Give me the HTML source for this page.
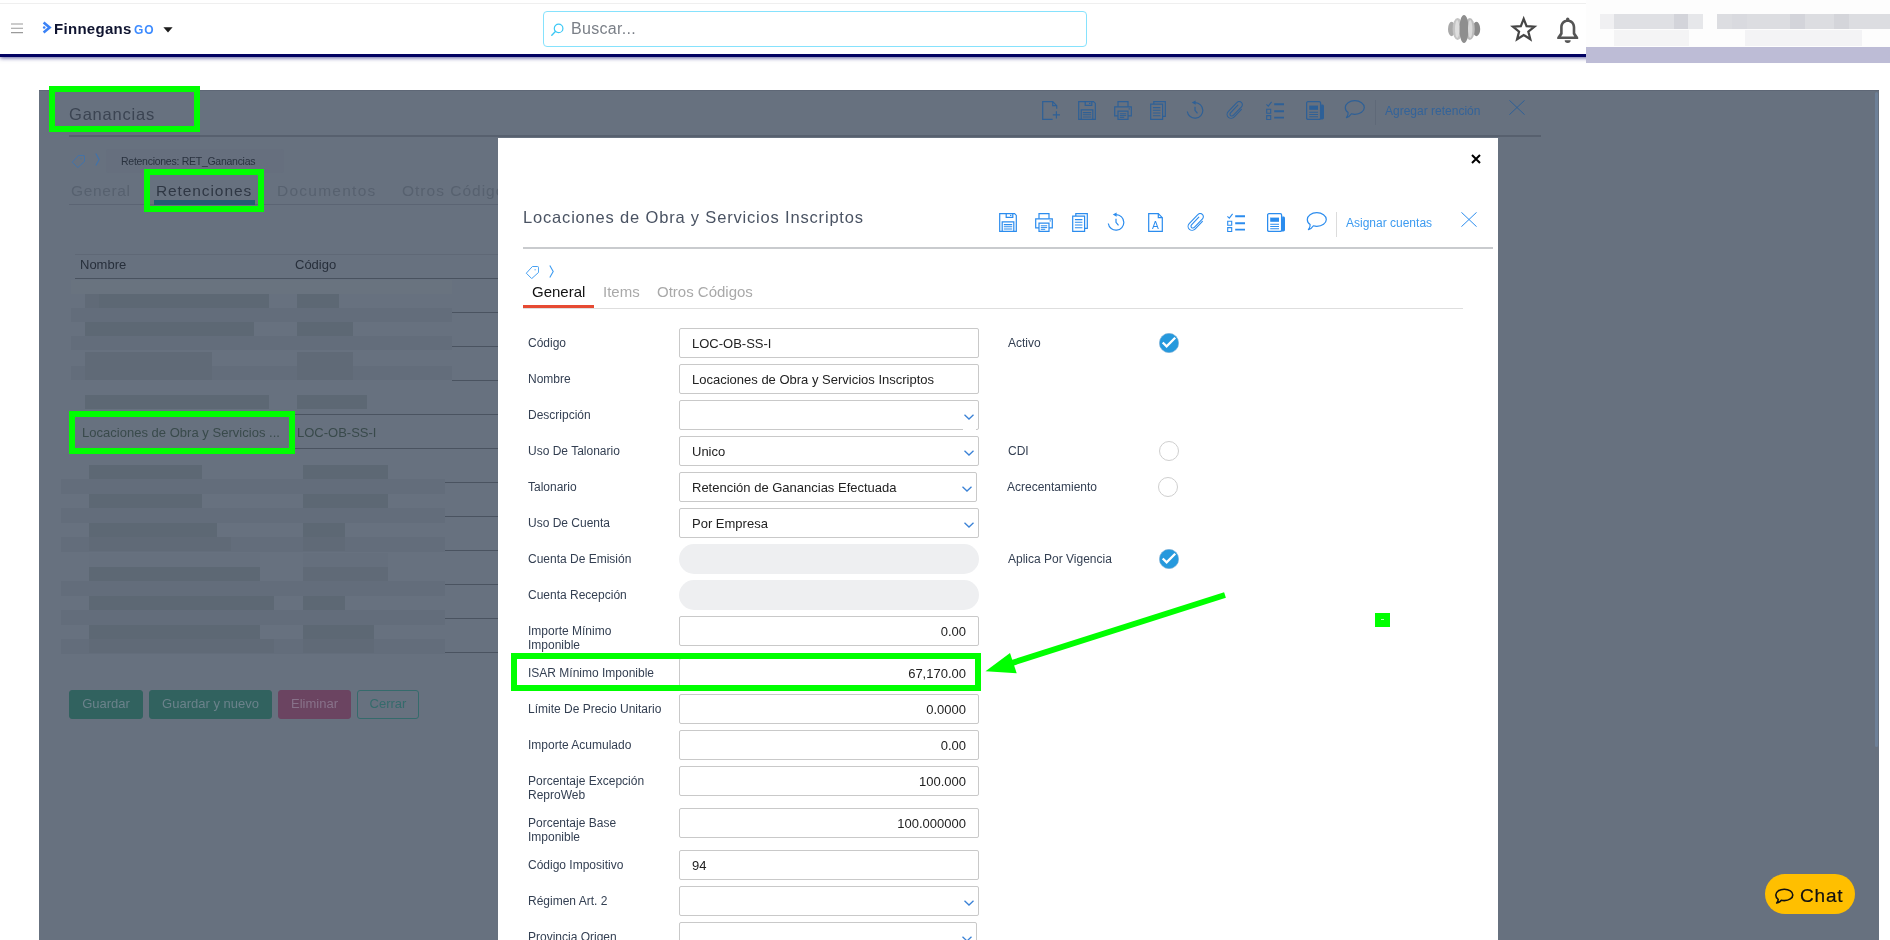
<!DOCTYPE html>
<html lang="es">
<head>
<meta charset="utf-8">
<title>Finnegans GO - Ganancias</title>
<style>
*{box-sizing:border-box;margin:0;padding:0}
html,body{width:1890px;height:940px;overflow:hidden;background:#fff;font-family:"Liberation Sans",sans-serif;color:#333}
#root{position:relative;width:1890px;height:940px;overflow:hidden;background:#fff;will-change:transform}
.abs{position:absolute}
.t{position:absolute;white-space:nowrap;line-height:1}
/* ---------- header ---------- */
#hdr{position:absolute;left:0;top:0;width:1890px;height:57px;background:#fff;border-bottom:3px solid #020262;box-shadow:0 1px 4px rgba(20,20,110,.7)}
#topline{position:absolute;left:0;top:3px;width:1590px;height:1px;background:#efefef}
#search{position:absolute;left:543px;top:11px;width:544px;height:36px;border:1px solid #86e2fd;border-radius:4px;background:#fff}
/* ---------- overlay ---------- */
#ov{position:absolute;left:39px;top:90px;width:1840px;height:850px;background:#67717f;overflow:hidden;border-top:1px solid #5e6776}
/* ---------- modal ---------- */
#modal{position:absolute;left:498px;top:138px;width:1000px;height:802px;background:#fff;overflow:hidden}
.lbl{position:absolute;font-size:12px;line-height:14px;color:#333f52;left:30px}
.inp{position:absolute;left:181px;width:300px;height:30px;border:1px solid #c9c9c9;border-radius:2px;background:#fff;font-size:13px;line-height:30px;color:#222;padding:0 12px;white-space:nowrap}
.inp.r{text-align:right}
.pill{position:absolute;left:181px;width:300px;height:30px;border-radius:15px;background:#eeeff1}
.g{position:absolute;border:6px solid #00ff00}
</style>
</head>
<body>
<div id="root">
<svg width="0" height="0" style="position:absolute">
<defs>
<symbol id="i-save" viewBox="0 0 18 19"><g fill="none" stroke="currentColor" stroke-width="1.2"><path d="M.7.7H15.6L17.300 2.400V18.300H.7z"/><path d="M7.200.7V4.300h6.600V.7"/><path d="M3.200 18.300V8.800h11.600v9.500"/><path d="M4.800 11.600h8.400M4.800 13.800h8.400M4.800 16h8.400" stroke-width="1.100"/><path d="M11 2.300h1.400" stroke-width="1.300"/></g></symbol>
<symbol id="i-print" viewBox="0 0 18 19"><g fill="none" stroke="currentColor" stroke-width="1.200"><path d="M4 5.800V.7h10v5.100"/><path d="M4 14.800H.7V5.800h16.600v9H14"/><path d="M4 10.200h10v8.100H4z"/><path d="M5.800 12.800h6.400M5.800 14.600h6.400M5.800 16.300h4.400" stroke-width="1"/><path d="M14.600 7.900h1.200" stroke-width="1.300"/></g></symbol>
<symbol id="i-copy" viewBox="0 0 17 19"><g fill="none" stroke="currentColor" stroke-width="1.200"><path d="M3.800 3V.7h11.500v14.600H12.600"/><path d="M.7 3.200h11.900v15.100H.7z"/><path d="M2.900 6.600h7.500M2.900 9.300h7.500M2.900 12h7.500M2.900 14.700h7.500" stroke-width="1.100"/></g></symbol>
<symbol id="i-hist" viewBox="0 0 18 19"><g fill="none" stroke="currentColor" stroke-width="1.200"><path d="M9.200 2.600A7.800 7.800 0 1 1 1.300 11.500"/><path d="M9 6.800v3.600l2.500 2.900"/><path d="M9.600.4v4.400L5.800 2.600z" fill="currentColor" stroke="none"/></g></symbol>
<symbol id="i-doca" viewBox="0 0 15 19"><g fill="none" stroke="currentColor" stroke-width="1.200"><path d="M.7.700h9.600l4 4v13.600H.7z"/><path d="M10.300.7v4h4"/></g><text x="7.500" y="15.600" font-size="10.200" text-anchor="middle" fill="currentColor" font-family="Liberation Sans, sans-serif">A</text></symbol>
<symbol id="i-newdoc" viewBox="0 0 19 19"><g fill="none" stroke="currentColor" stroke-width="1.200"><path d="M10.600 18.300H.7V.7h10l4 4v3"/><path d="M10.700.7v4h4"/><path d="M14.400 10.200v7.200M10.800 13.800h7.200"/></g></symbol>
<symbol id="i-clip" viewBox="0 0 18 19"><g fill="none" stroke="currentColor" stroke-width="1.100" stroke-linecap="round" stroke-linejoin="round"><path d="M15.400 8.300 8.300 15.900c-1.600 1.700-4.200 1.900-5.900.4-1.700-1.500-1.700-4-.2-5.700L10.800 1.700c1.200-1.300 3.200-1.400 4.500-.3 1.300 1.100 1.400 3.100.2 4.400L7.300 14.400c-.7.800-1.900.9-2.700.2-.8-.7-.8-1.900-.1-2.700L11.800 4.200"/></g></symbol>
<symbol id="i-list" viewBox="0 0 18 19"><g fill="none" stroke="currentColor"><path d="M.4 3.400 2.300 5.100 5.600.8" stroke-width="1.100"/><path d="M.7 8.300h4v4h-4zM.7 14.600h4v3.900h-4z" stroke-width="1.100"/><path d="M8.200 3.300h9.800M8.200 10.300h9.800M8.200 16.600h9.800" stroke-width="1.900"/></g></symbol>
<symbol id="i-news" viewBox="0 0 18 19"><path d="M15.200 3.600h1.200c.9 0 1.600.7 1.600 1.600v11.600c0 .9-.7 1.600-1.600 1.600h-2.200z" fill="currentColor"/><path d="M2 .7h11.200c.8 0 1.400.6 1.400 1.400v14.900c0 .8-.6 1.400-1.400 1.400H2c-.8 0-1.400-.6-1.400-1.400V2.100C.6 1.300 1.200.7 2 .7z" fill="none" stroke="currentColor" stroke-width="1.300"/><path d="M3.200 4.600h8.800v4.200H3.200z" fill="currentColor"/><path d="M3.200 11.300h8.800M3.200 13.500h8.800M3.200 15.700h8.800" stroke="currentColor" stroke-width="1.100" fill="none"/></symbol>
<symbol id="i-chat" viewBox="0 0 21 19"><path d="M10.800.7c5.300 0 9.500 3 9.500 6.800s-4.200 6.800-9.500 6.800c-1.200 0-2.400-.2-3.400-.5-.9 1.500-2.700 3.200-5 3.900 1.200-1.300 1.900-3.300 1.700-5.100C2.300 11.400 1.300 9.600 1.300 7.500 1.300 3.700 5.500.7 10.800.7z" fill="none" stroke="currentColor" stroke-width="1.200" stroke-linejoin="round"/></symbol>
<symbol id="i-x" viewBox="0 0 16 15"><path d="M.4.300 15.600 14.700M15.600.3.400 14.700" fill="none" stroke="currentColor" stroke-width="1"/></symbol>
<symbol id="i-tag" viewBox="0 0 14 14"><path d="M7.400 1.500H12.400Q13.600 1.500 13.600 2.700V7.400L6.700 13.600 1.300 8.200z" fill="none" stroke="currentColor" stroke-width=".95" stroke-linejoin="round"/><circle cx="10.100" cy="4.800" r=".75" fill="currentColor" opacity=".75"/></symbol>
<symbol id="i-chev" viewBox="0 0 5 13"><path d="M.8.500 4.200 6.500.8 12.500" fill="none" stroke="currentColor" stroke-width="1.100"/></symbol>
<symbol id="i-dd" viewBox="0 0 10 6"><path d="M.5.700 5 5 9.500.7" fill="none" stroke="currentColor" stroke-width="1.300"/></symbol>
</defs></svg>

<div id="hdr">
 <div id="topline"></div>
 <svg class="abs" style="left:11px;top:23px" width="12" height="11" viewBox="0 0 12 11"><path d="M0 1h12M0 5.3h12M0 9.6h12" stroke="#9a9a9a" stroke-width="1.1" fill="none"/></svg>
 <svg class="abs" style="left:42px;top:21px" width="10" height="13" viewBox="0 0 10 13"><path d="M1.6 1.6 7.6 6.5 1.6 11.4" stroke="#3b82f6" stroke-width="2.6" fill="none" stroke-linejoin="miter"/><circle cx="2.2" cy="6.5" r="1.3" fill="#3b82f6"/></svg>
 <span class="t" id="lg1" style="left:54px;top:21px;font-size:15px;font-weight:700;color:#0f1430;letter-spacing:.3px">Finnegans</span>
 <span class="t" id="lg2" style="left:134px;top:24px;font-size:12px;font-weight:700;color:#3d8bff;letter-spacing:1px">GO</span>
 <svg class="abs" style="left:163px;top:27px" width="10" height="6" viewBox="0 0 10 6"><path d="M.4.3h9.2L5 5.6z" fill="#1b1b1b"/></svg>
 <div id="search">
  <svg class="abs" style="left:7px;top:11px" width="13" height="13" viewBox="0 0 13 13"><circle cx="7.6" cy="5.4" r="4.3" stroke="#3cc8f5" stroke-width="1.2" fill="none"/><path d="M4.4 8.6.8 12.2" stroke="#3cc8f5" stroke-width="1.4" stroke-linecap="round"/></svg>
  <span class="t" id="busc" style="left:27px;top:9px;font-size:16px;color:#7a7f87;letter-spacing:.3px">Buscar...</span>
 </div>
 <svg class="abs" style="left:1446px;top:14px" width="36" height="30" viewBox="0 0 36 30">
  <ellipse cx="5.6" cy="15" rx="3.6" ry="7.2" fill="#a9a9a9"/>
  <ellipse cx="30.4" cy="15" rx="3.8" ry="7.2" fill="#8a8a8a"/>
  <ellipse cx="11.6" cy="15" rx="5" ry="11" fill="#c4c4c4"/>
  <ellipse cx="23.8" cy="15" rx="5" ry="11" fill="#bcbcbc"/>
  <ellipse cx="18" cy="15" rx="4.6" ry="14" fill="#8e8e8e"/>
  <ellipse cx="11.2" cy="15" rx="2.2" ry="9" fill="#dedede"/>
  <ellipse cx="24.2" cy="15" rx="2.2" ry="9" fill="#dadada"/>
 </svg>
 <svg class="abs" style="left:1508px;top:14px" width="32" height="32" viewBox="0 0 32 32"><path d="M15.70 4.80 18.56 12.17 26.45 12.61 20.32 17.60 22.34 25.24 15.70 20.96 9.06 25.24 11.08 17.60 4.95 12.61 12.84 12.17z" fill="none" stroke="#454545" stroke-width="2.200" stroke-linejoin="miter" stroke-miterlimit="10"/></svg>
 <svg class="abs" style="left:1556px;top:16px" width="24" height="28" viewBox="0 0 24 28"><path fill-rule="evenodd" fill="#555" d="M11.700 3.600C7 3.600 4.100 7 4.100 11.500V17L1.200 21.200V23H22.200V21.200L19.300 17V11.500C19.300 7 16.400 3.600 11.700 3.600zM11.700 6.100C8.600 6.100 6.700 8.500 6.700 11.500V18L5.100 20.500H18.300L16.700 18V11.500C16.700 8.500 14.800 6.100 11.700 6.100z"/><circle cx="11.700" cy="3.300" r="1.700" fill="#555"/><path d="M8.700 24.300h6a3 2.600 0 0 1-6 0z" fill="#555"/></svg>
</div>
<div class="abs" style="left:1586px;top:0;width:304px;height:62px;background:#fdfdfd"></div>
<div class="abs" style="left:1586px;top:47px;width:304px;height:16px;background:#bdbcd6"></div>
<div class="abs" style="left:1614px;top:14px;width:89px;height:15px;background:#dfe0e4"></div>
<div class="abs" style="left:1600px;top:14px;width:14px;height:15px;background:#f0f0f2"></div>
<div class="abs" style="left:1717px;top:14px;width:173px;height:15px;background:#dcdde1"></div>
<div class="abs" style="left:1674px;top:14px;width:14px;height:15px;background:#d3d4da"></div>
<div class="abs" style="left:1790px;top:14px;width:15px;height:15px;background:#d3d4da"></div>
<div class="abs" style="left:1834px;top:14px;width:15px;height:15px;background:#d4d5da"></div>
<div class="abs" style="left:1732px;top:14px;width:15px;height:15px;background:#d9dadf"></div>
<div class="abs" style="left:1688px;top:14px;width:15px;height:15px;background:#e6e7ea"></div>
<div class="abs" style="left:1614px;top:30px;width:75px;height:16px;background:#f4f4f5"></div>
<div class="abs" style="left:1745px;top:30px;width:117px;height:16px;background:#f3f3f5"></div>

<div id="ov"></div>
<span class="t" id="otitle" style="left:69px;top:106px;font-size:16.5px;color:#3b4452;letter-spacing:.8px">Ganancias</span>
<div class="abs" style="left:69px;top:135px;width:1472px;height:2px;background:#57606e"></div>
<div style="color:#2e6097">
<svg class="abs" style="left:1042px;top:101px" width="19" height="19"><use href="#i-newdoc"/></svg>
<svg class="abs" style="left:1078px;top:101px" width="18" height="19"><use href="#i-save"/></svg>
<svg class="abs" style="left:1114px;top:101px" width="18" height="19"><use href="#i-print"/></svg>
<svg class="abs" style="left:1150px;top:101px" width="17" height="19"><use href="#i-copy"/></svg>
<svg class="abs" style="left:1186px;top:100px" width="18" height="19"><use href="#i-hist"/></svg>
<svg class="abs" style="left:1226px;top:101px" width="18" height="19"><use href="#i-clip"/></svg>
<svg class="abs" style="left:1266px;top:101px" width="18" height="19"><use href="#i-list"/></svg>
<svg class="abs" style="left:1306px;top:101px" width="18" height="19"><use href="#i-news"/></svg>
<svg class="abs" style="left:1344px;top:100px" width="21" height="19"><use href="#i-chat"/></svg>
<svg class="abs" style="left:1509px;top:100px" width="16" height="15"><use href="#i-x"/></svg>
</div>
<div class="abs" style="left:1375px;top:100px;width:1px;height:25px;background:#5f6978"></div>
<span class="t" id="agre" style="left:1385px;top:105px;font-size:12px;color:#33639a">Agregar retención</span>
<div class="abs" style="left:106px;top:149px;width:178px;height:24px;background:#666f7e;border-radius:3px"></div>
<svg class="abs" style="left:71px;top:154px;color:#3f73ad" width="14" height="14"><use href="#i-tag"/></svg>
<svg class="abs" style="left:95px;top:153px;color:#3f73ad" width="5" height="13"><use href="#i-chev"/></svg>
<span class="t" id="bc" style="left:121px;top:156px;font-size:10.5px;color:#2a323f;letter-spacing:-.27px">Retenciones: RET_Ganancias</span>
<span class="t" id="ot1" style="left:71px;top:183px;font-size:15.5px;color:#57616f;letter-spacing:.63px">General</span>
<span class="t" id="ot2" style="left:156px;top:183px;font-size:15.5px;color:#2f3744;letter-spacing:.9px">Retenciones</span>
<span class="t" id="ot3" style="left:277px;top:183px;font-size:15.5px;color:#57616f;letter-spacing:1.25px">Documentos</span>
<span class="t" id="ot4" style="left:402px;top:183px;font-size:15.5px;color:#57616f;letter-spacing:1px">Otros Códigos</span>
<div class="abs" style="left:69px;top:204px;width:440px;height:1px;background:#5b6473"></div>
<div class="abs" style="left:154px;top:200px;width:101px;height:5px;background:#245a73"></div>
<div class="abs" style="left:75px;top:254px;width:430px;height:1px;background:#5f6876"></div>
<span class="t" id="th1" style="left:80px;top:258px;font-size:13px;color:#272f3b">Nombre</span>
<span class="t" id="th2" style="left:295px;top:258px;font-size:13px;color:#272f3b">Código</span>
<div class="abs" style="left:75px;top:278px;width:430px;height:1px;background:#49525f"></div>
<div class="abs" style="left:71px;top:308px;width:381px;height:14px;background:#636d7b"></div>
<div class="abs" style="left:71px;top:336px;width:381px;height:14px;background:#636d7b"></div>
<div class="abs" style="left:71px;top:366px;width:381px;height:14px;background:#636d7b"></div>
<div class="abs" style="left:61px;top:479px;width:384px;height:15px;background:#636d7b"></div>
<div class="abs" style="left:61px;top:508px;width:384px;height:15px;background:#636d7b"></div>
<div class="abs" style="left:61px;top:537px;width:384px;height:15px;background:#636d7b"></div>
<div class="abs" style="left:61px;top:581px;width:384px;height:15px;background:#636d7b"></div>
<div class="abs" style="left:61px;top:610px;width:384px;height:15px;background:#636d7b"></div>
<div class="abs" style="left:61px;top:639px;width:384px;height:15px;background:#636d7b"></div>
<div class="abs" style="left:71px;top:280px;width:381px;height:14px;background:#69737f"></div>
<div class="abs" style="left:452px;top:312px;width:50px;height:1px;background:#4a5360"></div>
<div class="abs" style="left:452px;top:346px;width:50px;height:1px;background:#4a5360"></div>
<div class="abs" style="left:452px;top:380px;width:50px;height:1px;background:#4a5360"></div>
<div class="abs" style="left:75px;top:414px;width:430px;height:1px;background:#4a5360"></div>
<div class="abs" style="left:75px;top:448px;width:430px;height:1px;background:#4a5360"></div>
<div class="abs" style="left:445px;top:482px;width:57px;height:1px;background:#4a5360"></div>
<div class="abs" style="left:445px;top:516px;width:57px;height:1px;background:#4a5360"></div>
<div class="abs" style="left:445px;top:550px;width:57px;height:1px;background:#4a5360"></div>
<div class="abs" style="left:445px;top:584px;width:57px;height:1px;background:#4a5360"></div>
<div class="abs" style="left:445px;top:618px;width:57px;height:1px;background:#4a5360"></div>
<div class="abs" style="left:445px;top:652px;width:57px;height:1px;background:#4a5360"></div>
<div class="abs" style="left:99px;top:294px;width:170px;height:14px;background:#5d6874"></div>
<div class="abs" style="left:297px;top:294px;width:42px;height:14px;background:#5d6874"></div>
<div class="abs" style="left:85px;top:294px;width:14px;height:14px;background:#606a77"></div>
<div class="abs" style="left:85px;top:322px;width:169px;height:14px;background:#5d6874"></div>
<div class="abs" style="left:297px;top:322px;width:56px;height:14px;background:#5d6874"></div>
<div class="abs" style="left:85px;top:352px;width:127px;height:28px;background:#606a77"></div>
<div class="abs" style="left:297px;top:352px;width:56px;height:28px;background:#606a77"></div>
<div class="abs" style="left:85px;top:395px;width:184px;height:14px;background:#5d6874"></div>
<div class="abs" style="left:297px;top:395px;width:70px;height:14px;background:#5d6874"></div>
<div class="abs" style="left:89px;top:465px;width:113px;height:14px;background:#5d6874"></div>
<div class="abs" style="left:303px;top:465px;width:85px;height:14px;background:#5d6874"></div>
<div class="abs" style="left:89px;top:494px;width:113px;height:14px;background:#5d6874"></div>
<div class="abs" style="left:303px;top:494px;width:85px;height:14px;background:#5d6874"></div>
<div class="abs" style="left:89px;top:523px;width:128px;height:14px;background:#5d6874"></div>
<div class="abs" style="left:303px;top:523px;width:42px;height:14px;background:#5d6874"></div>
<div class="abs" style="left:89px;top:537px;width:142px;height:14px;background:#606a77"></div>
<div class="abs" style="left:303px;top:537px;width:42px;height:14px;background:#606a77"></div>
<div class="abs" style="left:89px;top:553px;width:171px;height:14px;background:#66707e"></div>
<div class="abs" style="left:89px;top:567px;width:171px;height:14px;background:#5d6874"></div>
<div class="abs" style="left:303px;top:553px;width:85px;height:14px;background:#656f7d"></div><div class="abs" style="left:303px;top:567px;width:85px;height:14px;background:#606a77"></div>
<div class="abs" style="left:89px;top:596px;width:185px;height:14px;background:#5d6874"></div>
<div class="abs" style="left:303px;top:596px;width:42px;height:14px;background:#5d6874"></div>
<div class="abs" style="left:89px;top:625px;width:171px;height:14px;background:#5d6874"></div>
<div class="abs" style="left:303px;top:625px;width:71px;height:14px;background:#5d6874"></div>
<div class="abs" style="left:89px;top:639px;width:185px;height:14px;background:#606a77"></div>
<div class="abs" style="left:303px;top:639px;width:71px;height:14px;background:#606a77"></div>
<span class="t" id="sr1" style="left:82px;top:426px;font-size:13px;color:#394a4b;letter-spacing:.02px">Locaciones de Obra y Servicios ...</span>
<span class="t" id="sr2" style="left:297px;top:426px;font-size:13px;color:#394a4b">LOC-OB-SS-I</span>
<div class="abs" style="left:69px;top:690px;width:74px;height:29px;border-radius:3px;font-size:13px;line-height:25px;text-align:center;color:#6b828b;background:#31625f;border:1px solid #31625f;">Guardar</div>
<div class="abs" style="left:149px;top:690px;width:123px;height:29px;border-radius:3px;font-size:13px;line-height:25px;text-align:center;color:#6b828b;background:#31625f;border:1px solid #31625f;">Guardar y nuevo</div>
<div class="abs" style="left:278px;top:690px;width:73px;height:29px;border-radius:3px;font-size:13px;line-height:25px;text-align:center;color:#88728a;background:#6b4461;border:1px solid #6b4461;">Eliminar</div>
<div class="abs" style="left:357px;top:690px;width:62px;height:29px;border-radius:3px;font-size:13px;line-height:25px;text-align:center;color:#356b6c;border:1px solid #356b6c;">Cerrar</div>
<div class="abs" style="left:1875px;top:92px;width:3px;height:655px;background:#6d8098;border-radius:2px"></div>
<div id="modal">
<svg class="abs" style="left:973px;top:16px" width="10" height="10" viewBox="0 0 10 10"><path d="M1 1 9 9M9 1 1 9" stroke="#000" stroke-width="2" fill="none"/></svg>
<span class="t" id="mtitle" style="left:25px;top:71px;font-size:16.5px;color:#4a5363;letter-spacing:.82px">Locaciones de Obra y Servicios Inscriptos</span>
<div style="color:#2b8cee">
<svg class="abs" style="left:501px;top:75px" width="18" height="19"><use href="#i-save"/></svg>
<svg class="abs" style="left:537px;top:75px" width="18" height="19"><use href="#i-print"/></svg>
<svg class="abs" style="left:574px;top:75px" width="17" height="19"><use href="#i-copy"/></svg>
<svg class="abs" style="left:609px;top:74px" width="18" height="19"><use href="#i-hist"/></svg>
<svg class="abs" style="left:650px;top:75px" width="15" height="19"><use href="#i-doca"/></svg>
<svg class="abs" style="left:689px;top:75px" width="18" height="19"><use href="#i-clip"/></svg>
<svg class="abs" style="left:729px;top:75px" width="18" height="19"><use href="#i-list"/></svg>
<svg class="abs" style="left:769px;top:75px" width="18" height="19"><use href="#i-news"/></svg>
<svg class="abs" style="left:808px;top:74px" width="21" height="19"><use href="#i-chat"/></svg>
<svg class="abs" style="left:963px;top:74px" width="16" height="15"><use href="#i-x"/></svg>
</div>
<div class="abs" style="left:838px;top:74px;width:1px;height:25px;background:#dcdcdc"></div>
<span class="t" id="asig" style="left:848px;top:79px;font-size:12px;color:#3d9bf0">Asignar cuentas</span>
<div class="abs" style="left:25px;top:109px;width:970px;height:2px;background:#c9cbce"></div>
<svg class="abs" style="left:27px;top:127px;color:#3d9bf0" width="14" height="14"><use href="#i-tag"/></svg>
<svg class="abs" style="left:51px;top:127px;color:#3d9bf0" width="5" height="13"><use href="#i-chev"/></svg>
<span class="t" id="tabG" style="left:34px;top:146px;font-size:15px;color:#111">General</span>
<span class="t" id="tabI" style="left:105px;top:146px;font-size:15px;color:#a9a9a9">Items</span>
<span class="t" id="tabO" style="left:159px;top:146px;font-size:15px;color:#a9a9a9">Otros Códigos</span>
<div class="abs" style="left:25px;top:170px;width:940px;height:1px;background:#dedede"></div>
<div class="abs" style="left:25px;top:167px;width:71px;height:3px;background:#e64a33"></div>
<div class="lbl" style="top:198px">Código</div>
<div class="inp" style="top:190px;width:300px">LOC-OB-SS-I</div>
<div class="lbl" style="top:234px">Nombre</div>
<div class="inp" style="top:226px;width:300px">Locaciones de Obra y Servicios Inscriptos</div>
<div class="lbl" style="top:270px">Descripción</div>
<div class="inp" style="top:262px;width:300px"></div>
<div class="abs" style="left:465px;top:283px;width:13px;height:10px;background:#fff"></div>
<svg class="abs" style="left:466px;top:276px;color:#3b82d6" width="10" height="6"><use href="#i-dd"/></svg>
<div class="lbl" style="top:306px">Uso De Talonario</div>
<div class="inp" style="top:298px;width:300px">Unico</div>
<svg class="abs" style="left:466px;top:312px;color:#3b82d6" width="10" height="6"><use href="#i-dd"/></svg>
<div class="lbl" style="top:342px">Talonario</div>
<div class="inp" style="top:334px;width:298px">Retención de Ganancias Efectuada</div>
<svg class="abs" style="left:464px;top:348px;color:#3b82d6" width="10" height="6"><use href="#i-dd"/></svg>
<div class="lbl" style="top:378px">Uso De Cuenta</div>
<div class="inp" style="top:370px;width:300px">Por Empresa</div>
<svg class="abs" style="left:466px;top:384px;color:#3b82d6" width="10" height="6"><use href="#i-dd"/></svg>
<div class="lbl" style="top:414px">Cuenta De Emisión</div>
<div class="pill" style="top:406px"></div>
<div class="lbl" style="top:450px">Cuenta Recepción</div>
<div class="pill" style="top:442px"></div>
<div class="lbl" style="top:486px">Importe Mínimo<br>Imponible</div>
<div class="inp r" style="top:478px;width:300px">0.00</div>
<div class="lbl" style="top:528px">ISAR Mínimo Imponible</div>
<div class="inp r" style="top:520px;width:300px">67,170.00</div>
<div class="lbl" style="top:564px">Límite De Precio Unitario</div>
<div class="inp r" style="top:556px;width:300px">0.0000</div>
<div class="lbl" style="top:600px">Importe Acumulado</div>
<div class="inp r" style="top:592px;width:300px">0.00</div>
<div class="lbl" style="top:636px">Porcentaje Excepción<br>ReproWeb</div>
<div class="inp r" style="top:628px;width:300px">100.000</div>
<div class="lbl" style="top:678px">Porcentaje Base<br>Imponible</div>
<div class="inp r" style="top:670px;width:300px">100.000000</div>
<div class="lbl" style="top:720px">Código Impositivo</div>
<div class="inp" style="top:712px;width:300px">94</div>
<div class="lbl" style="top:756px">Régimen Art. 2</div>
<div class="inp" style="top:748px;width:300px"></div>
<svg class="abs" style="left:466px;top:762px;color:#3b82d6" width="10" height="6"><use href="#i-dd"/></svg>
<div class="lbl" style="top:792px">Provincia Origen</div>
<div class="inp" style="top:784px;width:298px"></div>
<svg class="abs" style="left:464px;top:798px;color:#3b82d6" width="10" height="6"><use href="#i-dd"/></svg>
<div class="lbl" style="left:510px;top:198px">Activo</div>
<svg class="abs" style="left:661px;top:195px" width="20" height="20" viewBox="0 0 20 20"><circle cx="10" cy="10" r="9.700" fill="#2699dd" stroke="#86b4d6" stroke-width=".6"/><path d="M3.700 9.500 7.600 13.300 16.200 4.700" fill="none" stroke="#fff" stroke-width="2.300"/></svg>
<div class="lbl" style="left:510px;top:306px">CDI</div>
<div class="abs" style="left:661px;top:303px;width:20px;height:20px;border:1px solid #cfcfcf;border-radius:50%;background:#fff"></div>
<div class="lbl" style="left:509px;top:342px">Acrecentamiento</div>
<div class="abs" style="left:660px;top:339px;width:20px;height:20px;border:1px solid #cfcfcf;border-radius:50%;background:#fff"></div>
<div class="lbl" style="left:510px;top:414px">Aplica Por Vigencia</div>
<svg class="abs" style="left:661px;top:411px" width="20" height="20" viewBox="0 0 20 20"><circle cx="10" cy="10" r="9.700" fill="#2699dd" stroke="#86b4d6" stroke-width=".6"/><path d="M3.700 9.500 7.600 13.300 16.200 4.700" fill="none" stroke="#fff" stroke-width="2.300"/></svg>
</div>
<div class="abs" style="left:1765px;top:874px;width:90px;height:40px;border-radius:20px;background:#ffbf00"></div>
<svg class="abs" style="left:1774px;top:887.700px" width="20" height="17" viewBox="0 0 20 17"><path d="M10.300 1.200c4.700 0 8.500 2.500 8.500 5.700s-3.800 5.700-8.500 5.700c-1.100 0-2.100-.1-3-.4-1 1.300-2.600 2.400-4.600 2.800.9-1 1.500-2.400 1.500-3.700C2.700 10.200 1.800 8.600 1.800 6.900c0-3.200 3.800-5.700 8.500-5.700z" fill="none" stroke="#111" stroke-width="1.600" stroke-linejoin="round"/></svg>
<span class="t" id="chat" style="left:1800px;top:886px;font-size:19px;color:#111;letter-spacing:.8px;font-weight:400;-webkit-text-stroke:.2px #111">Chat</span>
<div class="g" style="left:49px;top:86px;width:151px;height:46px"></div>
<div class="g" style="left:144px;top:169px;width:120px;height:43px"></div>
<div class="g" style="left:69px;top:411px;width:226px;height:43px"></div>
<div class="g" style="left:511px;top:653px;width:470px;height:38px"></div>
<svg class="abs" style="left:980px;top:585px" width="260" height="100" viewBox="980 585 260 100"><path d="M1225 595 1010 663.600" stroke="#00ff00" stroke-width="6" fill="none"/><path d="M985.500 671.300 1010 653 1016.700 673.300z" fill="#00ff00"/></svg>
<div class="abs" style="left:1375px;top:613px;width:15px;height:14px;background:#00ff00"></div>
<div class="abs" style="left:1381px;top:619px;width:3px;height:1px;background:#b8ffb8"></div>

</div>
</body>
</html>
